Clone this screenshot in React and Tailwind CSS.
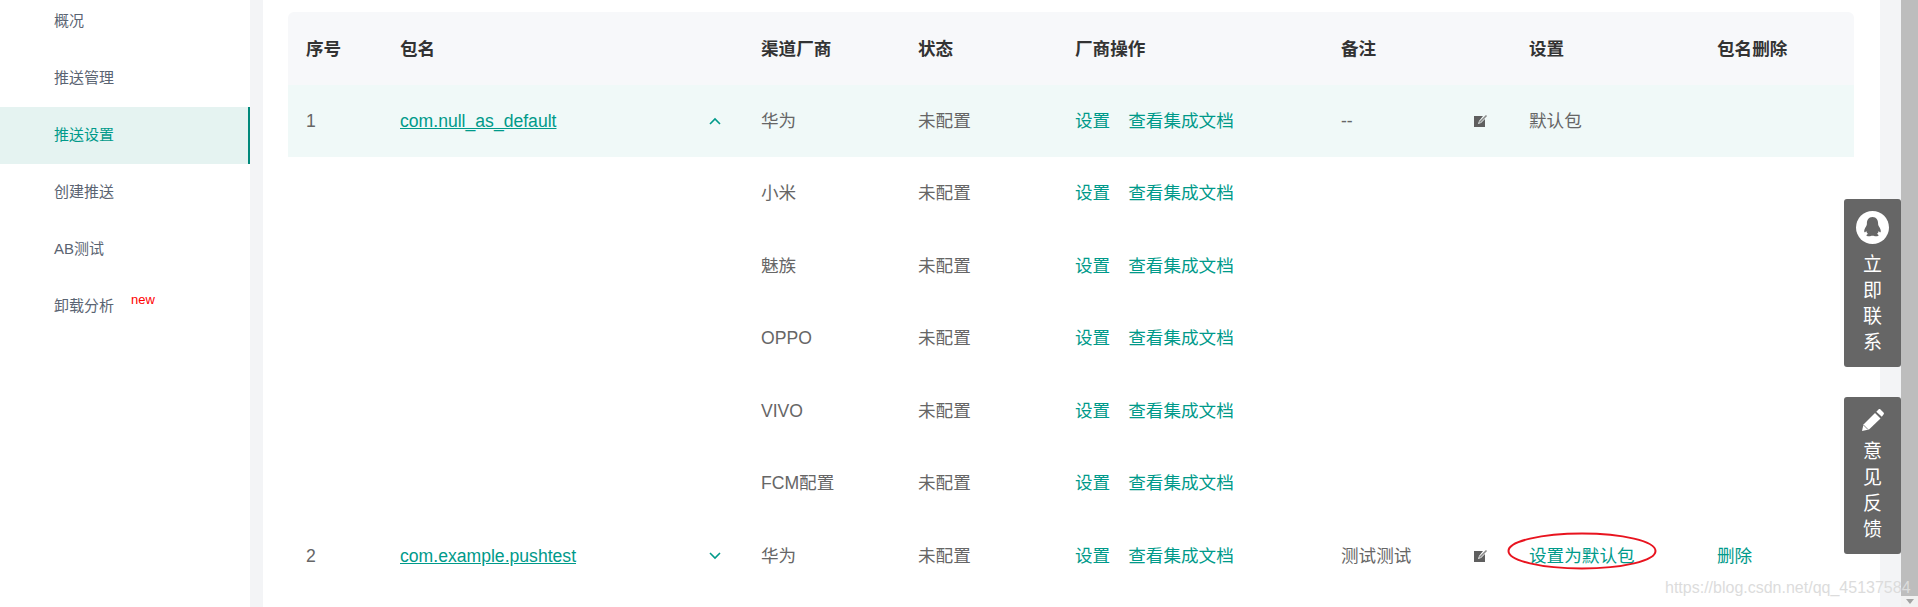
import React from 'react';

const FONT = '"Liberation Sans", "Noto Sans CJK SC", sans-serif';

const sideItems = ['概况', '推送管理', '推送设置', '创建推送', 'AB测试', '卸载分析'];
const cols = 'grid grid-cols-[94px_361px_157px_157px_266px_188px_188px_137px] items-center pl-[18px]';

const vendors = [
  { no: '1', pkg: 'com.null_as_default', open: true, vendor: '华为', note: '--', isDefault: true, active: true },
  { vendor: '小米' },
  { vendor: '魅族' },
  { vendor: 'OPPO' },
  { vendor: 'VIVO' },
  { vendor: 'FCM配置' },
  { no: '2', pkg: 'com.example.pushtest', open: false, vendor: '华为', note: '测试测试', isDefault: false },
];

const EditIcon = () => (
  <svg width="14" height="14" viewBox="0 0 14 14">
    <path d="M0 2h9L5 7l-1 3 3-1 4-4v8H0z" fill="#5f5f5f" />
    <path d="M5.500 8.500l7-7" stroke="#8a8a8a" strokeWidth="1.600" />
  </svg>
);

const Chevron = ({ up }) => (
  <svg width="12" height="8" viewBox="0 0 12 8" fill="none" stroke="#009a8a" strokeWidth="1.600">
    <path d={up ? 'M1 7l5-5 5 5' : 'M1 1l5 5 5-5'} />
  </svg>
);

const Row = ({ r }) => (
  <div className={`${cols} text-[17.6px] text-[#666] ${r.active ? 'h-[72px] bg-[#f0f9f8]' : 'h-[72.6px]'}`}>
    <div>{r.no}</div>
    <div className="flex items-center justify-between pr-[40px]">
      {r.pkg && <a href="#" className="text-[#009a8a] underline">{r.pkg}</a>}
      {r.pkg && <Chevron up={r.open} />}
    </div>
    <div>{r.vendor}</div>
    <div>未配置</div>
    <div className="flex gap-[18px] text-[#009a8a]">
      <a href="#">设置</a>
      <a href="#">查看集成文档</a>
    </div>
    <div className="flex items-center justify-between pr-[41px]">
      <span>{r.note}</span>
      {r.pkg && <EditIcon />}
    </div>
    <div>
      {r.pkg && (r.isDefault ? '默认包' : <a href="#" className="text-[#009a8a]">设置为默认包</a>)}
    </div>
    <div>{r.pkg && !r.isDefault && <a href="#" className="text-[#009a8a]">删除</a>}</div>
  </div>
);

const FloatButton = ({ icon, text }) => (
  <div className="w-[57px] rounded-[3px] bg-[#666] flex flex-col items-center pt-[12px] pb-[11px] text-white text-[19px] leading-[26px]">
    {icon}
    <div className="mt-[8px] flex flex-col items-center">
      {text.split('').map((c, i) => <span key={i}>{c}</span>)}
    </div>
  </div>
);

export default function App() {
  return (
    <div className="relative flex h-[607px] overflow-hidden bg-white" style={{ fontFamily: FONT }}>
      <aside className="w-[250px] shrink-0 -mt-[7px] text-[15px] text-[#5a6472]">
        {sideItems.map((s, i) => (
          <div
            key={s}
            className={`relative flex h-[57px] items-center pl-[54px] ${i === 2 ? 'bg-[#e5f3f1] text-[#009a8a] border-r-[2px] border-[#00897b]' : ''}`}
          >
            {s}
            {s === '卸载分析' && <span className="absolute left-[131px] top-[12px] text-[13px] text-[#ff0000]">new</span>}
          </div>
        ))}
      </aside>
      <div className="w-[13px] shrink-0 bg-[#f3f4f6]" />
      <main className="flex-1 pl-[25px] pt-[12px]">
        <div className="w-[1566px]">
          <div className={`${cols} h-[73px] pt-[1px] rounded-t-[6px] bg-[#f7f8fa] text-[17.6px] font-bold text-[#333]`}>
            <div>序号</div>
            <div>包名</div>
            <div>渠道厂商</div>
            <div>状态</div>
            <div>厂商操作</div>
            <div>备注</div>
            <div>设置</div>
            <div>包名删除</div>
          </div>
          {vendors.map((r, i) => <Row key={i} r={r} />)}
        </div>
      </main>
      <div className="w-[21px] shrink-0 bg-[#f3f4f6]" />
      <div className="w-[17px] shrink-0 flex flex-col bg-[#f1f1f1]">
        <div className="h-[596px] bg-[#bdbdbd]" />
        <div className="flex-1 flex items-center justify-center">
          <div className="h-0 w-0 border-x-[4px] border-t-[5px] border-x-transparent border-t-[#a3a3a3]" />
        </div>
      </div>

      <div className="absolute right-[17px] top-[199px] flex flex-col gap-[30px]">
        <FloatButton
          text="立即联系"
          icon={
            <svg width="33" height="33" viewBox="0 0 33 33">
              <circle cx="16.500" cy="16.500" r="16.500" fill="#fff" />
              <path d="M16.500 6c-4 0-5.600 3.200-5.600 6.500 0 1.200-.2 2-1 3.200-1.200 1.800-2 3.600-1.600 5.200.4 1 1.300.2 1.900-.9.3 1.200 1 2.200 1.800 2.900-1 .4-1.800 1-1.600 1.700.3.9 3.300.9 5.100.2h2c1.800.7 4.800.7 5.100-.2.2-.7-.6-1.300-1.600-1.700.8-.7 1.500-1.700 1.800-2.900.6 1.100 1.500 1.900 1.900.9.4-1.600-.4-3.400-1.600-5.200-.8-1.200-1-2-1-3.200C22.100 9.200 20.500 6 16.500 6z" fill="#666" />
            </svg>
          }
        />
        <FloatButton
          text="意见反馈"
          icon={
            <svg width="22" height="22" viewBox="0 0 22 22">
              <path d="M0 22l1.500-6.500L13 4l5.500 5.500L7 20.500z" fill="#fff" />
              <path d="M1.500 16l4.500 4.500" stroke="#666" strokeWidth="0.800" />
              <path d="M14.300 2.700l2.200-2.200c.6-.6 1.400-.6 2 0l3 3c.6.6.6 1.400 0 2l-1.700 2.200z" fill="#fff" />
            </svg>
          }
        />
      </div>

      <svg className="absolute left-[1507px] top-[532px]" width="150" height="38" viewBox="0 0 150 38" fill="none">
        <ellipse cx="75" cy="19" rx="73.500" ry="17.500" stroke="#e8141f" strokeWidth="2" />
      </svg>
      <div className="absolute left-[1665px] top-[578px] text-[16px] leading-[20px] text-[#dcdcdc]">
        https://blog.csdn.net/qq_45137584
      </div>
    </div>
  );
}
